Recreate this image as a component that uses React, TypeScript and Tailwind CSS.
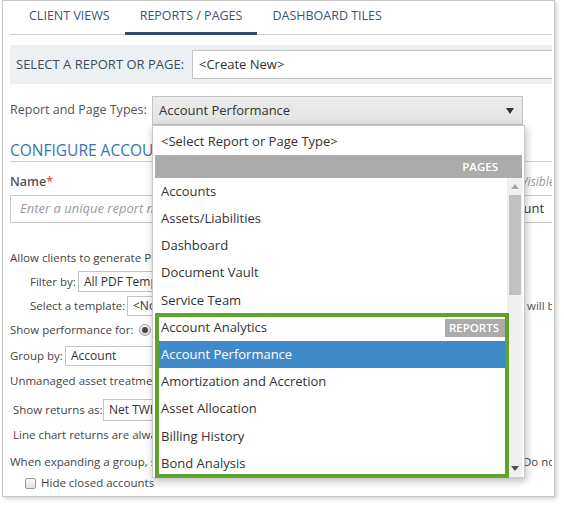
import React from "react";

const pageItems = ["Accounts", "Assets/Liabilities", "Dashboard", "Document Vault", "Service Team"];
const reportItems = ["Amortization and Accretion", "Asset Allocation", "Billing History", "Bond Analysis"];

function SmallSelect({ text }: { text: string }) {
  return (
    <div className="h-full w-[300px] shrink-0 border border-[#c4c4c4] bg-white flex items-center pl-[5px] text-[12px] text-[#333]">
      {text}
    </div>
  );
}

function TypeDropdown() {
  return (
    <div className="absolute left-[152px] top-[125px] w-[373px] h-[353px] border border-[#c8c8c8] bg-white shadow-[1px_3px_8px_rgba(0,0,0,0.28)] px-[2px] pt-[2px] flex flex-col text-[13px] text-[#333]">
      <div className="h-[27px] shrink-0 flex items-center pl-[6px]">&lt;Select Report or Page Type&gt;</div>
      <div className="h-[23px] shrink-0 bg-[#ababab] flex items-center justify-end pr-[24px] text-[11.5px] font-semibold text-white">
        PAGES
      </div>
      <div className="flex h-[299px]">
        <div className="flex-1 flex flex-col overflow-hidden">
          {pageItems.map((item) => (
            <div key={item} className="h-[27.2px] shrink-0 flex items-center pl-[6px]">
              {item}
            </div>
          ))}
          <div className="h-[27.2px] shrink-0 flex items-center pl-[6px]">
            <span className="flex-1">Account Analytics</span>
            <span className="h-[18px] w-[62px] bg-[#ababab] text-white text-[11.5px] font-semibold flex items-center justify-end pr-[8px]">
              REPORTS
            </span>
          </div>
          <div className="h-[27.2px] shrink-0 flex items-center pl-[6px] bg-[#3f8ac9] text-white">
            Account Performance
          </div>
          {reportItems.map((item) => (
            <div key={item} className="h-[27.2px] shrink-0 flex items-center pl-[6px]">
              {item}
            </div>
          ))}
        </div>
        <div className="w-[15px] bg-[#f0f0f0] flex flex-col items-center">
          <div className="h-[16px] flex items-center justify-center">
            <svg width="8" height="5" viewBox="0 0 8 5">
              <path d="M0 5 L4 0 L8 5 Z" fill="#a6a6a6" />
            </svg>
          </div>
          <div className="mt-[1px] h-[100px] w-[12px] bg-[#c1c1c1]" />
          <div className="flex-1" />
          <div className="h-[18px] flex items-center justify-center">
            <svg width="8" height="5" viewBox="0 0 8 5">
              <path d="M0 0 L8 0 L4 5 Z" fill="#505050" />
            </svg>
          </div>
        </div>
      </div>
    </div>
  );
}

export default function App() {
  return (
    <div className="relative w-[564px] h-[506px] bg-white font-['Open_Sans',sans-serif]">
      <div className="ml-[2px] w-[553px] h-[497px] border border-[#c6c6c6] shadow-[2px_2px_4px_rgba(0,0,0,0.18)] pl-[7px] pr-[2px]">
        <div className="h-full overflow-hidden">
          <div className="flex h-[34px] border-b border-[#cfcfcf] text-[12.5px] text-[#3b5573]">
            <div className="ml-[4px] px-[15px] flex items-center pb-[2px]">CLIENT VIEWS</div>
            <div className="relative px-[15px] flex items-center pb-[2px]">
              REPORTS / PAGES
              <span className="absolute left-0 right-0 bottom-[-1px] h-[3px] bg-[#2e4d6c]" />
            </div>
            <div className="px-[15px] flex items-center pb-[2px]">DASHBOARD TILES</div>
          </div>

          <div className="mt-[10px] h-[39px] bg-[#edf0f2] flex items-center pl-[6px] overflow-hidden">
            <span className="w-[176px] shrink-0 text-[13px] text-[#3d4b5a]">SELECT A REPORT OR PAGE:</span>
            <div className="h-[29px] w-[400px] shrink-0 border border-[#c4c4c4] bg-white flex items-center pl-[6px] text-[13px] text-[#333]">
              &lt;Create New&gt;
            </div>
          </div>

          <div className="mt-[12px] h-[29px] flex items-center">
            <span className="w-[142px] shrink-0 text-[12.5px] text-[#555]">Report and Page Types:</span>
            <div className="h-[29px] w-[371px] shrink-0 border border-[#c4c4c4] bg-gradient-to-b from-[#ececec] to-[#e3e3e3] flex items-center pl-[6px] pr-[8px] text-[13px] text-[#333]">
              <span className="flex-1">Account Performance</span>
              <svg width="8" height="6" viewBox="0 0 8 6">
                <path d="M0 0 L8 0 L4 6 Z" fill="#333" />
              </svg>
            </div>
          </div>

          <div className="mt-[16px] h-[21px] border-b border-[#cfcfcf] text-[15.5px] leading-[19px] text-[#3574ae] whitespace-nowrap">
            CONFIGURE ACCOUNT PERFORMANCE
          </div>

          <div className="mt-[10px] h-[20px] grid grid-cols-[511px_1fr] items-center">
            <span className="text-[12.5px] font-semibold text-[#555]">
              Name<span className="text-[#d9534f]">*</span>
            </span>
            <span className="text-[12px] italic text-[#999] whitespace-nowrap">Visible to clients</span>
          </div>

          <div className="mt-[3px] h-[28px] flex">
            <div className="w-[474px] shrink-0 border border-[#c8c8c8] flex items-center pl-[9px] text-[13px] italic text-[#999]">
              Enter a unique report name
            </div>
            <div className="w-[120px] shrink-0 border border-l-0 border-[#c8c8c8] flex items-center pl-[11px] text-[13px] text-[#333] whitespace-nowrap">
              Account
            </div>
          </div>

          <div className="mt-[26px] h-[18px] flex items-center text-[11.5px] text-[#444] whitespace-nowrap">
            Allow clients to generate PDF reports from this page
          </div>

          <div className="mt-[4px] h-[21px] flex items-center text-[11.5px] text-[#444] whitespace-nowrap pl-[20px]">
            <span className="w-[48px] shrink-0">Filter by:</span>
            <SmallSelect text="All PDF Templates" />
          </div>

          <div className="mt-[4px] h-[20px] flex items-center text-[11.5px] text-[#444] whitespace-nowrap pl-[20px]">
            <span className="w-[97px] shrink-0">Select a template:</span>
            <div className="h-full w-[392px] shrink-0 border border-[#c4c4c4] bg-white flex items-center pl-[5px] text-[12px] text-[#333]">
              &lt;None&gt;
            </div>
            <span className="ml-[8px] text-[#555]">will be displayed</span>
          </div>

          <div className="mt-[4px] h-[20px] flex items-center text-[11.5px] text-[#444] whitespace-nowrap">
            <span className="w-[129px] shrink-0">Show performance for:</span>
            <span className="w-[12px] h-[12px] rounded-full border border-[#a3a3a3] bg-gradient-to-b from-[#f4f4f4] to-[#dcdcdc] flex items-center justify-center">
              <span className="w-[6px] h-[6px] rounded-full bg-[#4a4a4a]" />
            </span>
            <span className="ml-[4px]">Accounts</span>
          </div>

          <div className="mt-[6px] h-[20px] flex items-center text-[11.5px] text-[#444] whitespace-nowrap">
            <span className="w-[55px] shrink-0">Group by:</span>
            <SmallSelect text="Account" />
          </div>

          <div className="mt-[6px] h-[18px] flex items-center text-[11.5px] text-[#444] whitespace-nowrap">
            Unmanaged asset treatment
          </div>

          <div className="mt-[9px] h-[22px] flex items-center text-[11.5px] text-[#444] whitespace-nowrap pl-[3px]">
            <span className="w-[90px] shrink-0">Show returns as:</span>
            <SmallSelect text="Net TWR" />
          </div>

          <div className="mt-[5px] h-[18px] flex items-center text-[11.5px] text-[#444] whitespace-nowrap pl-[3px]">
            Line chart returns are always shown as net TWR
          </div>

          <div className="mt-[9px] h-[18px] grid grid-cols-[513px_1fr] items-center text-[11.5px] text-[#444] whitespace-nowrap">
            <span className="overflow-hidden">When expanding a group, show accounts</span>
            <span>Do not</span>
          </div>

          <div className="mt-[3px] h-[18px] flex items-center text-[11.5px] text-[#444] whitespace-nowrap pl-[15px]">
            <span className="w-[11px] h-[11px] rounded-[2px] border border-[#9a9a9a] bg-gradient-to-b from-[#fafafa] to-[#e2e2e2]" />
            <span className="ml-[5px]">Hide closed accounts</span>
          </div>
        </div>
      </div>

      <TypeDropdown />
      <div className="absolute left-[155px] top-[313px] w-[354px] h-[165px] border-[4px] border-[#5ea42a]" />
    </div>
  );
}
